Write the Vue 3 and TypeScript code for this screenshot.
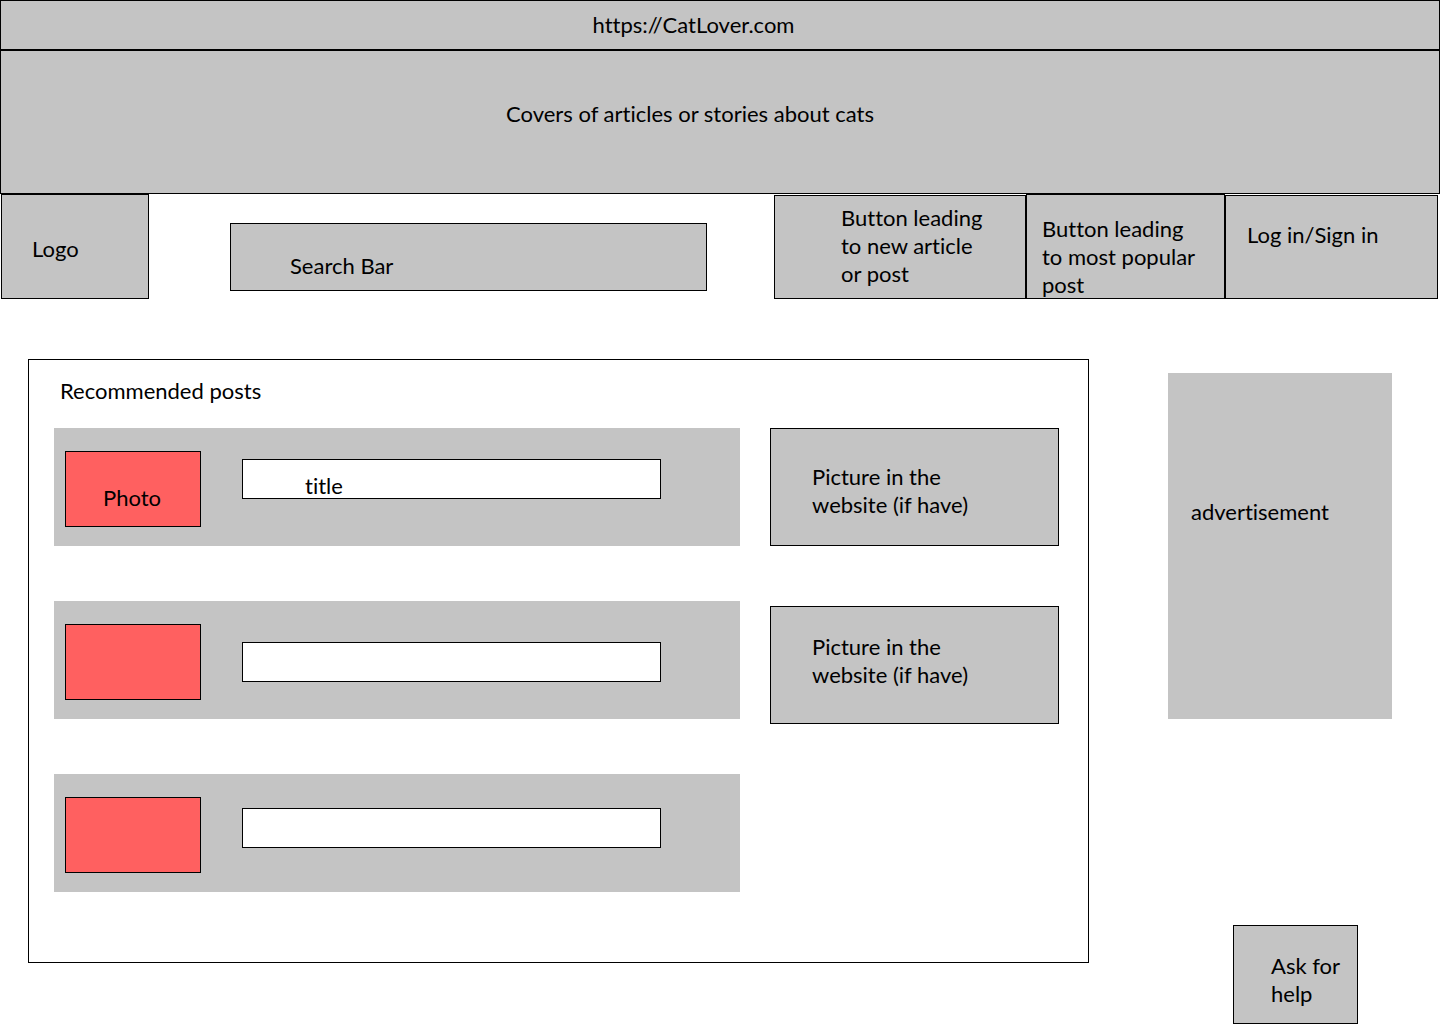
<script setup lang="ts">
interface Post {
  id: number
  photo: string
  title: string
  place: 'high' | 'low' | 'middle'
}

const posts: Post[] = [
  { id: 1, photo: 'Photo', title: 'title', place: 'high' },
  { id: 2, photo: '', title: '', place: 'low' },
  { id: 3, photo: '', title: '', place: 'middle' },
]

const pictures: string[] = ['Picture in the website (if have)', 'Picture in the website (if have)']
</script>

<template>
  <div class="page">
    <div class="address">https://CatLover.com</div>
    <section class="covers">Covers of articles or stories about cats</section>

    <header class="toolbar">
      <div class="logo box">Logo</div>
      <input class="search box" type="search" placeholder="Search Bar" aria-label="Search Bar" />
      <nav class="actions">
        <button class="action box newest" type="button">Button leading to new article or post</button>
        <button class="action box popular" type="button">Button leading to most popular post</button>
        <button class="action box login" type="button">Log in/Sign in</button>
      </nav>
    </header>

    <main class="content">
      <section class="recommended">
        <h2 class="heading">Recommended posts</h2>
        <div class="columns">
          <div class="posts">
            <article v-for="post in posts" :key="post.id" class="post">
              <div class="photo">{{ post.photo }}</div>
              <h3 class="title" :class="post.place">{{ post.title }}</h3>
            </article>
          </div>
          <div class="pictures">
            <div v-for="(picture, index) in pictures" :key="index" class="picture box">{{ picture }}</div>
          </div>
        </div>
      </section>

      <aside class="side">
        <div class="advertisement">advertisement</div>
        <button class="help box" type="button">Ask for help</button>
      </aside>
    </main>
  </div>
</template>

<style>
body {
  margin: 0;
  background: #fff;
}
</style>

<style scoped>
.page,
.page * {
  box-sizing: border-box;
  font-variant-ligatures: none;
}

.page {
  color: #000;
  font-family: Lato, "Liberation Sans", sans-serif;
  font-size: 22px;
  line-height: 28px;
}

.box {
  border: 1px solid #000;
  border-radius: 0;
  background: #c4c4c4;
  color: #000;
  font-family: inherit;
  font-size: inherit;
  line-height: inherit;
}

.address,
.covers {
  border: 1px solid #000;
  background: #c4c4c4;
  text-align: center;
}

.address {
  padding: 10px 53px 10px 0;
}

.covers {
  padding: 49px 60px 65px 0;
}

.toolbar {
  display: flex;
  align-items: flex-start;
  padding: 0 2px 0 1px;
}

.logo {
  width: 148px;
  height: 105px;
  padding: 40px 30px 0;
}

.search {
  flex: 1;
  min-width: 0;
  height: 68px;
  margin: 29px 67px 0 81px;
  padding: 27px 59px 11px;
  outline-offset: 2px;
  appearance: none;
}

.search::placeholder {
  color: #000;
  opacity: 1;
}

.actions {
  display: flex;
  align-items: flex-end;
}

.action {
  display: flex;
  align-items: flex-start;
  height: 104px;
  overflow: hidden;
  text-align: left;
  cursor: pointer;
}

.newest {
  width: 252px;
  padding: 8px 32px 0 66px;
}

.popular {
  width: 199px;
  height: 105px;
  padding: 20px 24px 0 15px;
}

.login {
  width: 213px;
  padding: 25px 21px 0;
}

.content {
  display: flex;
  align-items: flex-start;
  padding: 60px 48px 0 28px;
}

.recommended {
  flex: 1;
  min-width: 0;
  padding: 17px 29px 70px 25px;
  border: 1px solid #000;
}

.heading {
  margin: 0 0 23px 6px;
  font-size: inherit;
  font-weight: 400;
}

.columns {
  display: flex;
  align-items: flex-start;
  gap: 30px;
}

.posts {
  display: flex;
  flex: 1;
  flex-direction: column;
  gap: 55px;
  min-width: 0;
}

.post {
  display: flex;
  align-items: flex-start;
  height: 118px;
  padding: 0 79px 0 11px;
  background: #c4c4c4;
}

.photo {
  width: 136px;
  height: 76px;
  margin: 23px 41px 0 0;
  padding: 32px 37px 0;
  border: 1px solid #000;
  background: #ff6060;
}

.title {
  flex: 1;
  height: 40px;
  margin: 0;
  padding: 12px 62px 0;
  border: 1px solid #000;
  background: #fff;
  font-size: inherit;
  font-weight: 400;
}

.high {
  margin-top: 31px;
}

.low {
  margin-top: 41px;
}

.middle {
  margin-top: 34px;
}

.pictures {
  display: flex;
  flex-direction: column;
  gap: 60px;
  width: 289px;
}

.picture {
  height: 118px;
  padding: 34px 60px 0 41px;
}

.picture + .picture {
  padding-top: 26px;
}

.side {
  display: flex;
  flex-direction: column;
  align-items: flex-end;
  gap: 206px;
  width: 224px;
  margin: 14px 0 0 79px;
}

.advertisement {
  width: 100%;
  height: 346px;
  padding: 125px 23px 0;
  background: #c4c4c4;
}

.help {
  display: flex;
  align-items: flex-start;
  width: 125px;
  height: 99px;
  margin-right: 34px;
  padding: 26px 10px 0 37px;
  text-align: left;
  cursor: pointer;
}
</style>
